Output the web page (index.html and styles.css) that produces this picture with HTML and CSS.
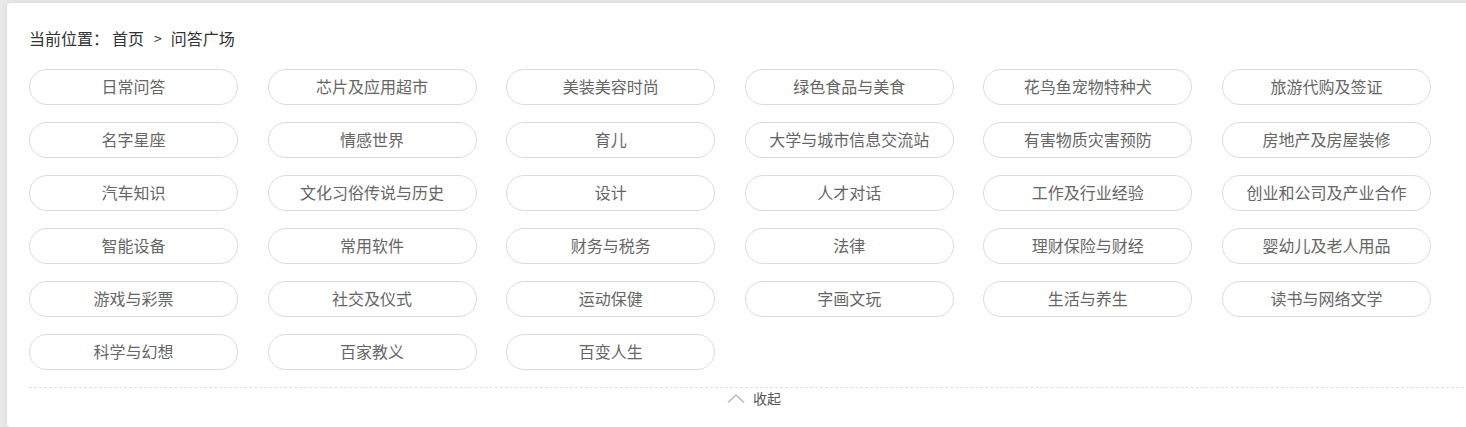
FILE: index.html
```html
<!DOCTYPE html>
<html lang="zh-CN">
<head>
<meta charset="utf-8">
<title>问答广场</title>
<link rel="stylesheet" href="styles.css">
</head>
<body>
<div class="card">
  <div class="crumb">
    <span class="crumb-label">当前位置：</span><a class="crumb-link" href="#">首页</a><span class="crumb-sep">&gt;</span><span class="crumb-cur">问答广场</span>
  </div>
  <div class="tags">
    <a class="tag" href="#">日常问答</a>
    <a class="tag" href="#">芯片及应用超市</a>
    <a class="tag" href="#">美装美容时尚</a>
    <a class="tag" href="#">绿色食品与美食</a>
    <a class="tag" href="#">花鸟鱼宠物特种犬</a>
    <a class="tag" href="#">旅游代购及签证</a>
    <a class="tag" href="#">名字星座</a>
    <a class="tag" href="#">情感世界</a>
    <a class="tag" href="#">育儿</a>
    <a class="tag" href="#">大学与城市信息交流站</a>
    <a class="tag" href="#">有害物质灾害预防</a>
    <a class="tag" href="#">房地产及房屋装修</a>
    <a class="tag" href="#">汽车知识</a>
    <a class="tag" href="#">文化习俗传说与历史</a>
    <a class="tag" href="#">设计</a>
    <a class="tag" href="#">人才对话</a>
    <a class="tag" href="#">工作及行业经验</a>
    <a class="tag" href="#">创业和公司及产业合作</a>
    <a class="tag" href="#">智能设备</a>
    <a class="tag" href="#">常用软件</a>
    <a class="tag" href="#">财务与税务</a>
    <a class="tag" href="#">法律</a>
    <a class="tag" href="#">理财保险与财经</a>
    <a class="tag" href="#">婴幼儿及老人用品</a>
    <a class="tag" href="#">游戏与彩票</a>
    <a class="tag" href="#">社交及仪式</a>
    <a class="tag" href="#">运动保健</a>
    <a class="tag" href="#">字画文玩</a>
    <a class="tag" href="#">生活与养生</a>
    <a class="tag" href="#">读书与网络文学</a>
    <a class="tag" href="#">科学与幻想</a>
    <a class="tag" href="#">百家教义</a>
    <a class="tag" href="#">百变人生</a>
  </div>
  <div class="fold">
    <a class="fold-btn" href="#">
      <svg class="fold-icon" width="18" height="9" viewBox="0 0 18 9"><path d="M1 8.5 L9 1 L17 8.5" fill="none" stroke="#bdbdbd" stroke-width="1.6"/></svg>
      <span>收起</span>
    </a>
  </div>
</div>
</body>
</html>
```

FILE: styles.css
```css
html, body {
  margin: 0;
  padding: 0;
}
body {
  background: #e9e9e9;
  overflow: hidden;
  height: 427px;
  font-family: "Microsoft YaHei", "Noto Sans CJK SC", "Noto Sans", sans-serif;
}
.card {
  margin: 3px 0 0 7px;
  width: 1494px;
  height: 424px;
  background: #fff;
  border-radius: 4px;
  box-shadow: 0 0 6px rgba(0, 0, 0, 0.08);
  padding: 25px 22px 0;
  box-sizing: border-box;
}
.crumb {
  font-size: 16px;
  line-height: 20px;
  color: #333;
  display: flex;
  align-items: center;
  height: 20px;
}
.crumb-label {
  margin-right: 3px;
}
.crumb-link {
  color: #333;
  text-decoration: none;
}
.crumb-sep {
  margin: 0 9px 0 10px;
  font-size: 14px;
}
.crumb-cur {
  color: #333;
}
.tags {
  margin-top: 21px;
  display: grid;
  grid-template-columns: repeat(6, 209px);
  column-gap: 29.6px;
  row-gap: 17px;
}
.tag {
  display: flex;
  align-items: center;
  justify-content: center;
  height: 36px;
  box-sizing: border-box;
  border: 1px solid #dcdcdc;
  border-radius: 18px;
  font-size: 16px;
  line-height: 20px;
  padding-bottom: 3px;
  color: #666;
  text-decoration: none;
}
.fold {
  margin-top: 17px;
  border-top: 1px dashed #e0e0e0;
  display: flex;
  justify-content: center;
}
.fold-btn {
  display: flex;
  align-items: center;
  gap: 8px;
  font-size: 14px;
  line-height: 20px;
  color: #555;
  text-decoration: none;
}
.fold-icon {
  display: block;
}
```
